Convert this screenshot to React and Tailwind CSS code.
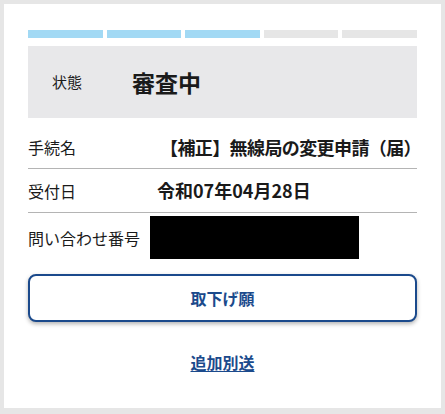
export default function App() {
  const steps = [true, true, true, false, false];

  return (
    <div
      className="w-[445px] h-[414px] bg-[#e6e6e6] pt-[4px] pl-[4px] pr-[4px] pb-[6px] text-[#1a1a1a]"
      style={{ fontFamily: '"Noto Sans CJK JP", "Noto Sans", sans-serif' }}
    >
      <div className="h-full bg-white px-[24px] pt-[26px]">
        {/* Progress */}
        <div className="flex gap-[4px]">
          {steps.map((done, i) => (
            <div
              key={i}
              className={`h-[8px] flex-1 ${done ? 'bg-[#a2d9f4]' : 'bg-[#e6e6e6]'}`}
            />
          ))}
        </div>

        {/* Status */}
        <div className="mt-[8px] h-[72px] bg-[#e8e8ea] flex items-center pl-[24px]">
          <span className="text-[15px] w-[80px]">状態</span>
          <span className="text-[23px] font-bold">審査中</span>
        </div>

        {/* Details */}
        <div className="mt-[8px]">
          <div className="flex items-center h-[43px] border-b border-[#b4b4b4]">
            <span className="w-[129px] shrink-0 text-[16px]">手続名</span>
            <span className="pl-[3px] text-[18px] tracking-[-0.6px] font-bold whitespace-nowrap">【補正】無線局の変更申請（届）</span>
          </div>
          <div className="flex items-center h-[44px] border-b border-[#b4b4b4]">
            <span className="w-[129px] shrink-0 text-[16px]">受付日</span>
            <span className="text-[18px] font-bold">令和07年04月28日</span>
          </div>
          <div className="flex items-center h-[49px]">
            <span className="w-[122px] shrink-0 text-[16px]">問い合わせ番号</span>
            <span className="w-[209px] h-[43px] bg-black" />
          </div>
        </div>

        {/* Actions */}
        <button className="mt-[12px] w-full h-[48px] rounded-[8px] border-2 border-[#1b4a8c] bg-white text-[#1b4a8c] text-[16px] font-bold shadow-[0_2px_4px_rgba(0,0,0,0.3)]">
          取下げ願
        </button>
        <div className="mt-[28px] text-center">
          <a href="#" className="text-[#1b4a8c] text-[16px] font-bold underline underline-offset-2">
            追加別送
          </a>
        </div>
      </div>
    </div>
  );
}
